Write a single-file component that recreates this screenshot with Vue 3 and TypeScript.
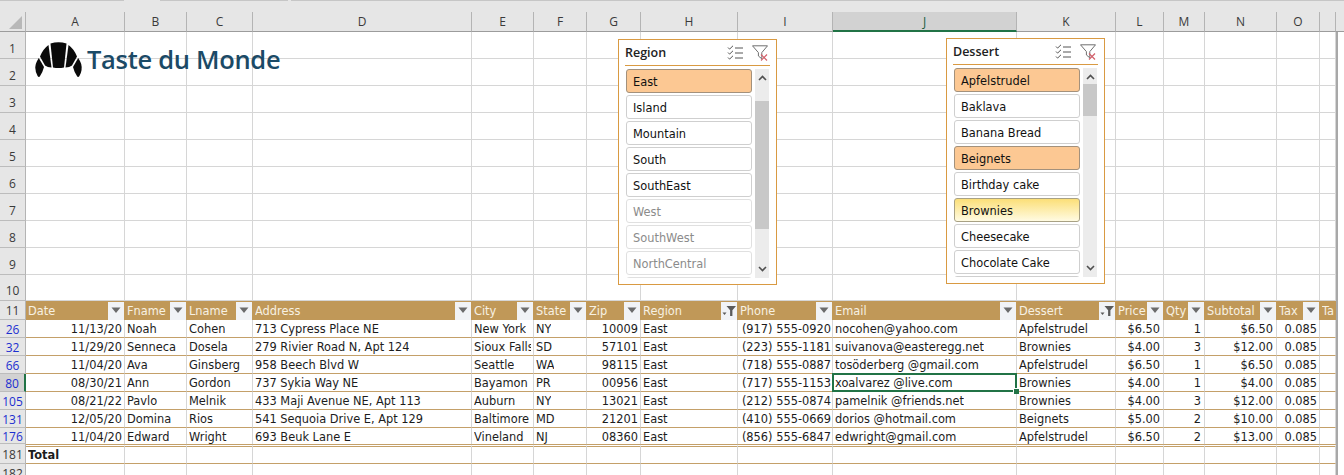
<script setup lang="ts">
type Align = 'l' | 'r'
interface Col { key: string; label: string; width: number; align: Align; filtered?: boolean; noBtn?: boolean }

const cols: Col[] = [
  { key: 'A', label: 'Date', width: 99, align: 'r' },
  { key: 'B', label: 'Fname', width: 62, align: 'l' },
  { key: 'C', label: 'Lname', width: 66, align: 'l' },
  { key: 'D', label: 'Address', width: 219, align: 'l' },
  { key: 'E', label: 'City', width: 62, align: 'l' },
  { key: 'F', label: 'State', width: 53, align: 'l' },
  { key: 'G', label: 'Zip', width: 54, align: 'r' },
  { key: 'H', label: 'Region', width: 97, align: 'l', filtered: true },
  { key: 'I', label: 'Phone', width: 95, align: 'r' },
  { key: 'J', label: 'Email', width: 184, align: 'l' },
  { key: 'K', label: 'Dessert', width: 99, align: 'l', filtered: true },
  { key: 'L', label: 'Price', width: 48, align: 'r' },
  { key: 'M', label: 'Qty', width: 41, align: 'r' },
  { key: 'N', label: 'Subtotal', width: 72, align: 'r' },
  { key: 'O', label: 'Tax', width: 43, align: 'r' },
  { key: 'P', label: 'Ta', width: 16, align: 'r', noBtn: true },
]

const gridColumns = ['26px', ...cols.map((c) => c.width + 'px'), '8px'].join(' ')
const blankRows = [1, 2, 3, 4, 5, 6, 7, 8, 9, 10]

const rows: { id: number; cells: string[] }[] = [
  { id: 26, cells: ['11/13/20', 'Noah', 'Cohen', '713 Cypress Place NE', 'New York', 'NY', '10009', 'East', '(917) 555-0920', 'nocohen@yahoo.com', 'Apfelstrudel', '$6.50', '1', '$6.50', '0.085', ''] },
  { id: 32, cells: ['11/29/20', 'Senneca', 'Dosela', '279 Rivier Road N, Apt 124', 'Sioux Falls', 'SD', '57101', 'East', '(223) 555-1181', 'suivanova@easteregg.net', 'Brownies', '$4.00', '3', '$12.00', '0.085', ''] },
  { id: 66, cells: ['11/04/20', 'Ava', 'Ginsberg', '958 Beech Blvd W', 'Seattle', 'WA', '98115', 'East', '(718) 555-0887', 'tosöderberg @gmail.com', 'Apfelstrudel', '$6.50', '1', '$6.50', '0.085', ''] },
  { id: 80, cells: ['08/30/21', 'Ann', 'Gordon', '737 Sykia Way NE', 'Bayamon', 'PR', '00956', 'East', '(717) 555-1153', 'xoalvarez @live.com', 'Brownies', '$4.00', '1', '$4.00', '0.085', ''] },
  { id: 105, cells: ['08/21/22', 'Pavlo', 'Melnik', '433 Maji Avenue NE, Apt 113', 'Auburn', 'NY', '13021', 'East', '(212) 555-0874', 'pamelnik @friends.net', 'Brownies', '$4.00', '3', '$12.00', '0.085', ''] },
  { id: 131, cells: ['12/05/20', 'Domina', 'Rios', '541 Sequoia Drive E, Apt 129', 'Baltimore', 'MD', '21201', 'East', '(410) 555-0669', 'dorios @hotmail.com', 'Beignets', '$5.00', '2', '$10.00', '0.085', ''] },
  { id: 176, cells: ['11/04/20', 'Edward', 'Wright', '693 Beuk Lane E', 'Vineland', 'NJ', '08360', 'East', '(856) 555-6847', 'edwright@gmail.com', 'Apfelstrudel', '$6.50', '2', '$13.00', '0.085', ''] },
]

type ItemState = 'on' | 'off' | 'hover' | 'dim'
interface Slicer { cls: string; title: string; items: { label: string; state: ItemState }[] }
const slicers: Slicer[] = [
  {
    cls: 'region',
    title: 'Region',
    items: [
      { label: 'East', state: 'on' },
      { label: 'Island', state: 'off' },
      { label: 'Mountain', state: 'off' },
      { label: 'South', state: 'off' },
      { label: 'SouthEast', state: 'off' },
      { label: 'West', state: 'dim' },
      { label: 'SouthWest', state: 'dim' },
      { label: 'NorthCentral', state: 'dim' },
      { label: '', state: 'dim' },
    ],
  },
  {
    cls: 'dessert',
    title: 'Dessert',
    items: [
      { label: 'Apfelstrudel', state: 'on' },
      { label: 'Baklava', state: 'off' },
      { label: 'Banana Bread', state: 'off' },
      { label: 'Beignets', state: 'on' },
      { label: 'Birthday cake', state: 'off' },
      { label: 'Brownies', state: 'hover' },
      { label: 'Cheesecake', state: 'off' },
      { label: 'Chocolate Cake', state: 'off' },
      { label: '', state: 'off' },
    ],
  },
]
</script>

<template>
  <div class="app">
    <div class="ribbon-edge">
      <span class="tab t1"></span>
      <span class="tab t2"></span>
      <span class="tab t3"></span>
    </div>

    <div class="sheet" :style="{ gridTemplateColumns: gridColumns }">
      <!-- column letters -->
      <div class="corner"><span class="corner-tri"></span></div>
      <div v-for="c in cols" :key="c.key" class="col-head" :class="{ 'col-sel': c.key === 'J' }">
        {{ c.key === 'P' ? '' : c.key }}
      </div>
      <div class="col-head end"></div>

      <!-- rows 1 to 10 -->
      <template v-for="r in blankRows" :key="r">
        <div class="row-head tall">{{ r }}</div>
        <div v-for="c in cols" :key="c.key" class="cell"></div>
        <div class="edge"></div>
      </template>

      <!-- table header -->
      <div class="row-head">11</div>
      <div v-for="c in cols" :key="c.key" class="th">
        <span class="th-label">{{ c.label }}</span>
        <span v-if="!c.noBtn" class="fbtn">
          <svg v-if="c.filtered" width="15" height="14" viewBox="0 0 15 14">
            <path d="M4.5 2h9.5l-3.6 4.2V12H8.1V6.2z" fill="#5a5a5a" />
            <path d="M.5 8.5h4l-2 2.6z" fill="#5a5a5a" />
          </svg>
          <svg v-else width="10" height="7" viewBox="0 0 10 7">
            <path d="M0.5 0.5h9L5 6z" fill="#6b6b6b" />
          </svg>
        </span>
      </div>
      <div class="edge"></div>

      <!-- data -->
      <template v-for="(r, ri) in rows" :key="r.id">
        <div class="row-head link" :class="{ 'row-sel': r.id === 80 }">{{ r.id }}</div>
        <div
          v-for="(c, ci) in cols"
          :key="c.key"
          class="td"
          :class="[c.align === 'r' ? 'right' : '', 'col-' + c.key, ri === rows.length - 1 ? 'td-last' : '']"
        >
          <span class="td-text">{{ r.cells[ci] }}</span>
          <span v-if="r.id === 80 && c.key === 'J'" class="selection"><i class="handle"></i></span>
        </div>
        <div class="edge"></div>
      </template>

      <!-- totals -->
      <div class="row-head">181</div>
      <div v-for="(c, ci) in cols" :key="c.key" class="td total">
        <span class="td-text">{{ ci === 0 ? 'Total' : '' }}</span>
      </div>
      <div class="edge"></div>

      <div class="row-head">182</div>
      <div v-for="c in cols" :key="c.key" class="cell"></div>
      <div class="edge"></div>
    </div>

    <!-- logo floats over the grid -->
    <div class="logo">
      <svg class="croissant" width="48" height="36" viewBox="0 0 48 36">
        <g fill="#0a0a0a">
          <path d="M15.5 1.5Q23.5-1 31.5 1.5L29 25.5Q23.5 26.5 18 25.5Z" />
          <path d="M13.5 3L16.5 25.5Q12.5 25.5 10 23.5L5 14.5Q8 7 13.5 3Z" />
          <path d="M3.8 16L9 25Q7.5 31 4.8 34.6Q3.6 35.6 2.6 34Q-0.8 28 0.8 22Q1.8 19 3.8 16Z" />
        </g>
        <g fill="#0a0a0a" transform="translate(47 0) scale(-1 1)">
          <path d="M13.5 3L16.5 25.5Q12.5 25.5 10 23.5L5 14.5Q8 7 13.5 3Z" />
          <path d="M3.8 16L9 25Q7.5 31 4.8 34.6Q3.6 35.6 2.6 34Q-0.8 28 0.8 22Q1.8 19 3.8 16Z" />
        </g>
      </svg>
      <span class="logo-text">Taste du Monde</span>
    </div>

    <!-- slicers float over the grid -->
    <div v-for="s in slicers" :key="s.title" class="slicer" :class="s.cls">
      <div class="sl-head">
        <span class="sl-title">{{ s.title }}</span>
        <svg class="sl-multi" width="16" height="15" viewBox="0 0 16 15" fill="none" stroke="#555" stroke-width="1">
          <path d="M1 2.5l1.6 1.6L6 .8M1 7.5l1.6 1.6L6 5.8M1 12.5l1.6 1.6L6 10.8" />
          <path d="M8 3h8M8 8h8M8 13h8" />
        </svg>
        <svg class="sl-clear" width="16" height="16" viewBox="0 0 16 16" fill="none">
          <path d="M.5.8h15L9.8 7.6v6.2L6.4 11V7.6z" stroke="#6f6f6f" stroke-width="1" fill="#fff" />
          <path d="M9 9.5l6 6M15 9.5l-6 6" stroke="#d2606a" stroke-width="1.2" />
        </svg>
      </div>
      <div class="sl-body">
        <div class="sl-list">
          <div v-for="(it, i) in s.items" :key="i" class="sl-item" :class="it.state">{{ it.label }}</div>
        </div>
        <div class="sl-scroll">
          <svg class="chev" width="9" height="6" viewBox="0 0 9 6">
            <path d="M1 5l3.5-3.5L8 5" fill="none" stroke="#505050" stroke-width="1.6" />
          </svg>
          <div class="thumb"></div>
          <svg class="chev down" width="9" height="6" viewBox="0 0 9 6">
            <path d="M1 1l3.5 3.5L8 1" fill="none" stroke="#505050" stroke-width="1.6" />
          </svg>
        </div>
      </div>
    </div>
  </div>
</template>

<style scoped>
.app {
  position: relative;
  width: 1344px;
  height: 475px;
  overflow: hidden;
  background: #fff;
  font-family: "DejaVu Sans", Verdana, sans-serif;
  font-size: 11.4px;
  color: #1c1c1c;
}

.ribbon-edge {
  height: 12px;
  background: #e6e6e6;
  display: flex;
  gap: 36px;
}
.tab { height: 1px; background: #c6c6c6; display: block; }
.t1 { width: 124px; }
.t2 { width: 128px; }
.t3 { flex: 1; margin-left: -33px; }

.sheet {
  display: grid;
  grid-template-rows: 20px repeat(9, 27px) 26px 19px repeat(6, 18px) 16px 20px 18px;
}

.corner {
  background: #e6e6e6;
  border-right: 1px solid #b4b4b4;
  border-bottom: 1px solid #9c9c9c;
  position: relative;
}
.corner-tri {
  position: absolute;
  right: 3px;
  bottom: 2px;
  width: 0;
  height: 0;
  border-left: 13px solid transparent;
  border-bottom: 13px solid #b8b8b8;
}
.col-head {
  background: #e6e6e6;
  border-right: 1px solid #b4b4b4;
  border-bottom: 1px solid #9c9c9c;
  box-sizing: border-box;
  display: flex;
  align-items: center;
  justify-content: center;
  font-family: "Open Sans", sans-serif;
  font-size: 12px;
  color: #3a3a3a;
}
.col-head.end { border-right: none; }
.col-sel {
  background: #d2d2d2;
  border-bottom: 2px solid #217346;
  color: #215c3e;
}
.row-head {
  background: #e6e6e6;
  border-right: 1px solid #b4b4b4;
  border-bottom: 1px solid #bcbcbc;
  box-sizing: border-box;
  display: flex;
  align-items: center;
  justify-content: center;
  padding-top: 1px;
  font-family: "Open Sans", sans-serif;
  font-size: 12px;
  color: #3a3a3a;
  overflow: hidden;
}
.row-head.tall { padding-top: 6px; }
.row-head.link { color: #1c2fd0; }
.row-sel {
  background: #d2d2d2;
  border-right: 2px solid #217346;
  color: #1c2fd0;
}
.cell {
  box-sizing: border-box;
  border-right: 1px solid #d6d6d6;
  border-bottom: 1px solid #d6d6d6;
}
.edge {
  border-left: 2px solid #a8a8a8;
  background: #fff;
}
.th {
  background: #c09858;
  color: #f7f1e3;
  display: flex;
  align-items: center;
  min-width: 0;
  overflow: hidden;
  padding: 1px 0 0 2px;
}
.th-label {
  flex: 1;
  min-width: 0;
  white-space: nowrap;
  overflow: hidden;
}
.fbtn {
  flex: none;
  width: 16px;
  height: 18px;
  margin: -1px 1px 0 0;
  background: #f1f3f6;
  display: flex;
  align-items: center;
  justify-content: center;
}
.td {
  position: relative;
  box-sizing: border-box;
  border-right: 1px solid #d6d6d6;
  border-bottom: 1px solid #c4a069;
  display: flex;
  align-items: center;
  padding: 1px 2px 0 2px;
  white-space: nowrap;
  min-width: 0;
}
.td.right { justify-content: flex-end; }
.td.col-I { padding-right: 1px; }
.td.col-L, .td.col-M, .td.col-N { padding-right: 3px; }
.td-text { overflow: hidden; }
.td.total {
  border-top: 3px double #c4a069;
  font-weight: 700;
  padding-top: 0;
}
.td-last { border-bottom: none; }
.selection {
  position: absolute;
  top: -1px;
  left: -1px;
  right: -1px;
  bottom: -1px;
  border: 2px solid #217346;
  z-index: 2;
}
.handle {
  position: absolute;
  right: -4px;
  bottom: -4px;
  width: 5px;
  height: 5px;
  background: #217346;
  border: 1px solid #fff;
  border-width: 1px 0 0 1px;
}

.logo {
  position: absolute;
  left: 35px;
  top: 42px;
  display: flex;
  align-items: flex-start;
}
.logo-text {
  margin-left: 4px;
  font-family: "Open Sans", sans-serif;
  font-weight: 600;
  font-size: 25.5px;
  letter-spacing: -0.3px;
  line-height: 35px;
  color: #1b4a66;
}

.slicer {
  position: absolute;
  box-sizing: border-box;
  width: 159px;
  height: 246px;
  background: #fff;
  border: 1px solid #d99a42;
  padding: 0 6px 0 6px;
  display: flex;
  flex-direction: column;
}
.slicer.region { left: 618px; top: 39px; }
.slicer.dessert { left: 946px; top: 38px; }
.sl-head {
  height: 26px;
  flex: none;
  box-sizing: border-box;
  border-bottom: 1px solid #d99a42;
  display: flex;
  align-items: center;
}
.sl-title {
  flex: 1;
  font-family: "Open Sans", sans-serif;
  font-weight: 600;
  font-size: 12.5px;
  color: #222;
}
.sl-multi { margin-right: 9px; }
.sl-clear { margin-right: 2px; }
.sl-body {
  display: flex;
  margin-top: 3px;
  height: 209px;
  overflow: hidden;
}
.sl-list {
  width: 126px;
  margin-left: 1px;
  overflow: hidden;
  flex: none;
}
.sl-item {
  box-sizing: border-box;
  height: 24px;
  margin-bottom: 2px;
  border-radius: 3px;
  border: 1px solid #cfcfcf;
  background: #fff;
  padding: 2px 0 0 6px;
  display: flex;
  align-items: center;
  color: #111;
}
.sl-item.on {
  background: #fcc893;
  border-color: #a3917c;
}
.sl-item.hover {
  background: linear-gradient(#fbdf78, #fffbe2);
  border-color: #a8a184;
}
.sl-item.dim {
  border-color: #e0e0e0;
  color: #8b8b8b;
}
.sl-scroll {
  position: relative;
  flex: none;
  width: 14px;
  margin-left: 3px;
  background: #ececec;
}
.thumb {
  position: absolute;
  left: 0;
  right: 0;
  background: #c8c8c8;
}
.region .thumb { top: 32px; height: 128px; }
.dessert .thumb { top: 16px; height: 32px; }
.chev { position: absolute; left: 2.5px; top: 6px; }
.chev.down { top: auto; bottom: 6px; }
</style>
